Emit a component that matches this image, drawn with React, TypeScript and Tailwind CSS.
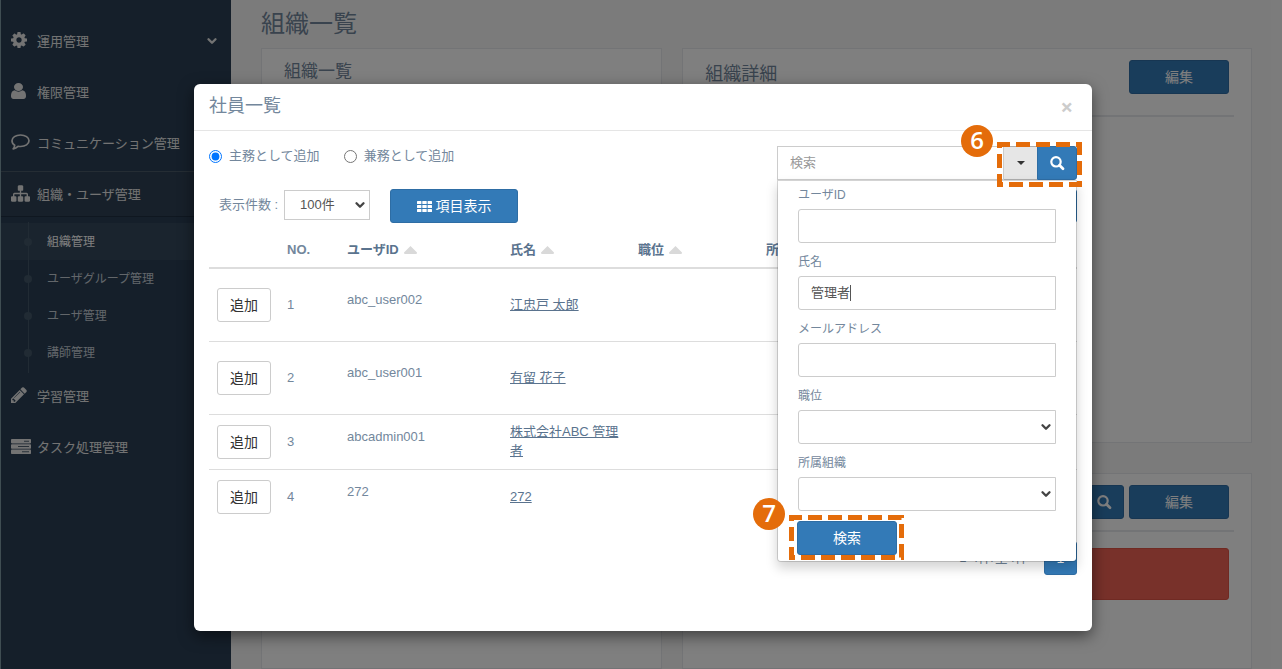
import { useState } from 'react'
import type { ReactNode } from 'react'
import { ChevronDown } from 'lucide-react'

const users = [
  { no: 1, id: 'abc_user002', name: '江忠戸 太郎', row: 'h-[73px]' },
  { no: 2, id: 'abc_user001', name: '有留 花子', row: 'h-[73px]' },
  { no: 3, id: 'abcadmin001', name: '株式会社ABC 管理者', row: 'h-[55px]' },
  { no: 4, id: '272', name: '272', row: 'h-[55px]' }
]

const subMenu = ['組織管理', 'ユーザグループ管理', 'ユーザ管理', '講師管理']

const primary = 'rounded-[3px] border border-[#2e6da4] bg-[#337ab7] text-sm text-white'
const field = 'h-[34px] w-full border border-[#ccc] bg-white px-3 text-[13px] text-[#555] outline-none'

function GearIcon() {
  return (
    <svg className="size-4" viewBox="0 0 1536 1536" fill="currentColor">
      <path d="M1024 768q0-106-75-181t-181-75-181 75-75 181 75 181 181 75 181-75 75-181zm512-109v222q0 12-8 23t-20 13l-185 28q-19 54-39 91 35 50 107 138 10 12 10 25t-9 23q-27 37-99 108t-94 71q-12 0-26-9l-138-108q-44 23-91 38-16 136-29 186-7 28-36 28H657q-14 0-24.5-8.5t-11.5-21.5l-28-184q-49-16-90-37l-141 107q-10 9-25 9-14 0-25-11-126-114-165-168-7-10-7-23 0-12 8-23 15-21 51-66.5t54-70.5q-27-50-41-99L29 913q-13-2-21-12.500T0 877V655q0-12 8-23t19-13l186-28q14-46 39-92-40-57-107-138-10-12-10-24 0-10 9-23 26-36 98.500-107.500T337 135q13 0 26 10l138 107q44-23 91-38 16-136 29-186 7-28 36-28h222q14 0 24.500 8.500T915 30l28 184q49 16 90 37l142-107q9-9 24-9 13 0 25 10 129 119 165 170 7 8 7 22 0 12-8 23-15 21-51 66.500t-54 70.500q26 50 41 98l183 28q13 2 21 12.500t8 23.500z" />
    </svg>
  )
}

function UserIcon() {
  return (
    <svg className="h-4 w-[15px]" viewBox="0 0 1280 1536" preserveAspectRatio="none" fill="currentColor">
      <path d="M1280 1271q0 109-62.500 187t-150.500 78H213q-88 0-150.500-78T0 1271q0-85 8.500-160.500t31.500-152 58.500-131 94-89T327 704q131 128 313 128t313-128q76 0 134.500 34.500t94 89 58.500 131 31.500 152 8.500 160.500zm-256-887q0 159-112.500 271.500T640 768 368.500 655.500 256 384t112.500-271.500T640 0t271.500 112.500T1024 384z" />
    </svg>
  )
}

function CommentIcon() {
  return (
    <svg className="h-4 w-[19px]" viewBox="0 0 19 16" fill="none" stroke="currentColor" strokeWidth="1.7" strokeLinejoin="round">
      <path d="M9.5 1 C14.300 1 18 3.500 18 6.800 S14.300 12.500 9.500 12.500 C8.600 12.500 7.800 12.400 7 12.300 C5.700 13.600 4 14.500 2.200 14.800 C3.100 13.900 3.600 12.700 3.700 11.200 C2 10.200 1 8.600 1 6.800 C1 3.500 4.700 1 9.500 1 Z" />
    </svg>
  )
}

function SitemapIcon() {
  return (
    <svg className="size-[19px]" viewBox="0 0 1792 1792" fill="currentColor">
      <path d="M1792 1248v320q0 40-28 68t-68 28h-320q-40 0-68-28t-28-68v-320q0-40 28-68t68-28h96V960H960v192h96q40 0 68 28t28 68v320q0 40-28 68t-68 28H736q-40 0-68-28t-28-68v-320q0-40 28-68t68-28h96V960H320v192h96q40 0 68 28t28 68v320q0 40-28 68t-68 28H96q-40 0-68-28t-28-68v-320q0-40 28-68t68-28h96V960q0-52 38-90t90-38h512V640h-96q-40 0-68-28t-28-68V224q0-40 28-68t68-28h320q40 0 68 28t28 68v320q0 40-28 68t-68 28h-96v192h512q52 0 90 38t38 90v192h96q40 0 68 28t28 68z" />
    </svg>
  )
}

function PencilIcon() {
  return (
    <svg className="size-4" viewBox="0 128 1536 1536" fill="currentColor">
      <path d="M363 1536l91-91-235-235-91 91v107h128v128h107zm523-928q0-22-22-22-10 0-17 7l-542 542q-7 7-7 17 0 22 22 22 10 0 17-7l542-542q7-7 7-17zm-54-192l416 416-832 832H0v-416zm683 96q0 53-37 90l-166 166-416-416 166-165q36-38 90-38 53 0 91 38l235 234q37 39 37 91z" />
    </svg>
  )
}

function TasksIcon() {
  return (
    <svg className="h-[15px] w-5" viewBox="0 0 20 15">
      <g fill="currentColor">
        <rect width="20" height="4.400" rx="0.800" />
        <rect y="5.300" width="20" height="4.400" rx="0.800" />
        <rect y="10.600" width="20" height="4.400" rx="0.800" />
      </g>
      <g fill="#2a3f54">
        <rect x="13" y="1.800" width="5" height="0.800" />
        <rect x="7" y="7.100" width="11" height="0.800" />
        <rect x="11" y="12.400" width="7" height="0.800" />
      </g>
    </svg>
  )
}

function SearchIcon() {
  return (
    <svg className="size-4" viewBox="0 0 16 16" fill="none" stroke="currentColor">
      <circle cx="7" cy="6.800" r="4.700" strokeWidth="2.200" />
      <path d="M10.500 10.300 L14 13.800" strokeWidth="2.800" strokeLinecap="round" />
    </svg>
  )
}

function GridIcon() {
  return (
    <svg className="h-[11px] w-[15px]" viewBox="0 0 15 11" fill="currentColor">
      {[0, 4, 8].map(y => [0, 5.3, 10.6].map(x => <rect key={`${x}-${y}`} x={x} y={y} width="4.400" height="3" rx="0.500" />))}
    </svg>
  )
}

function MenuItem({ icon, label, active, open }: { icon: ReactNode; label: string; active?: boolean; open?: boolean }) {
  return (
    <a
      href="#"
      className={`mb-[5px] flex h-[46px] items-center border-y pr-3 pl-2.5 ${
        active ? 'border-t-[#4a5a69] border-b-[#1f2f40] bg-[#2e4154]' : 'border-transparent'
      }`}
    >
      <span className="flex w-[26px] pb-0.5">{icon}</span>
      <span className="flex-1 pt-0.5">{label}</span>
      {open && <ChevronDown className="size-3.5" strokeWidth={4} />}
    </a>
  )
}

function Sidebar() {
  return (
    <nav className="w-[231px] shrink-0 border-l border-[#7e9aa5] bg-[#2a3f54] pt-[18px] text-[#e7e7e7]">
      <MenuItem icon={<GearIcon />} label="運用管理" open />
      <MenuItem icon={<UserIcon />} label="権限管理" />
      <MenuItem icon={<CommentIcon />} label="コミュニケーション管理" />
      <MenuItem icon={<SitemapIcon />} label="組織・ユーザ管理" active />
      <ul className="relative pt-px pb-0.5 text-xs">
        <li className="absolute top-0 bottom-0 left-[27px] w-px bg-[#425668]" />
        {subMenu.map((label, i) => (
          <li key={label} className={i === 0 ? 'bg-[#34485c]' : ''}>
            <a href="#" className="flex h-[37px] items-center pl-[23px]">
              <span className="mr-[15px] size-2 rounded-full bg-[#425668]" />
              <span className={i === 0 ? 'text-white' : 'text-[#c5cdd5]'}>{label}</span>
            </a>
          </li>
        ))}
      </ul>
      <MenuItem icon={<PencilIcon />} label="学習管理" />
      <MenuItem icon={<TasksIcon />} label="タスク処理管理" />
    </nav>
  )
}

function Background() {
  return (
    <main className="flex min-w-0 flex-1 flex-col bg-[#f7f7f7] px-[30px] text-[#73879c]">
      <h1 className="flex h-12 items-center text-2xl">組織一覧</h1>
      <div className="-mx-2.5 flex flex-1">
        <div className="flex w-5/12 px-2.5">
          <section className="flex-1 border border-[#e6e9ed] bg-white px-[22px] pt-[11px]">
            <h2 className="text-[17px] leading-6">組織一覧</h2>
          </section>
        </div>
        <div className="flex w-7/12 flex-col gap-[30px] px-2.5">
          <section className="h-[395px] border border-[#e6e9ed] bg-white px-[17px] pt-[11px]">
            <div className="flex h-[57px] items-start justify-between border-b-2 border-[#e6e9ed] px-[5px]">
              <h2 className="pt-0.5 text-lg leading-6">組織詳細</h2>
              <button type="button" className={`${primary} h-[34px] w-[100px]`}>編集</button>
            </div>
          </section>
          <section className="flex-1 border border-[#e6e9ed] bg-white px-[17px] pt-[11px]">
            <div className="flex h-[47px] items-start justify-end gap-[5px] border-b-2 border-[#e6e9ed] pr-[5px]">
              <button type="button" aria-label="検索" className={`${primary} flex h-[34px] w-10 items-center justify-center`}>
                <SearchIcon />
              </button>
              <button type="button" className={`${primary} h-[34px] w-[100px]`}>編集</button>
            </div>
            <div className="mx-[5px] mt-4 h-[52px] rounded-[3px] border border-[#e05547] bg-[#f06254]" />
          </section>
        </div>
      </div>
    </main>
  )
}

/* Numbered badge of the manual's callouts */
function Step({ n, className }: { n: number; className: string }) {
  return (
    <span
      className={`absolute z-20 flex size-8 items-center justify-center rounded-full bg-[#e46c0a] pb-0.5 font-['Open_Sans',sans-serif] text-2xl font-semibold text-white ${className}`}
    >
      {n}
    </span>
  )
}

function DashedFrame({ width, height, className }: { width: number; height: number; className: string }) {
  return (
    <svg width={width} height={height} className={`pointer-events-none absolute z-10 max-w-none ${className}`}>
      <rect
        x="2.5"
        y="2.5"
        width={width - 5}
        height={height - 5}
        fill="none"
        stroke="#e46c0a"
        strokeWidth="5"
        strokeDasharray="14 6"
        strokeDashoffset="3.5"
      />
    </svg>
  )
}

function Select({ id, className, children }: { id: string; className: string; children?: ReactNode }) {
  return (
    <div className={`relative ${className}`}>
      <select id={id} className="h-full w-full appearance-none rounded-l-[inherit] border border-[#ccc] bg-white pl-[15px] text-[13px] text-[#555] outline-none">
        {children}
      </select>
      <ChevronDown className="pointer-events-none absolute top-1/2 right-[3px] size-3.5 -translate-y-1/2 text-[#444]" strokeWidth={4} />
    </div>
  )
}

function SearchDropdown() {
  const [name, setName] = useState('管理者')

  return (
    <form className="absolute inset-x-0 top-[34px] rounded-b border border-black/15 bg-white bg-clip-padding px-5 pt-[5px] pb-1.5 shadow-[0_6px_12px_rgba(0,0,0,0.175)]">
      <label htmlFor="userId" className="block h-[23px] text-xs leading-[18px]">ユーザID</label>
      <input id="userId" className={`${field} mb-2.5 block rounded-l-[3px]`} />
      <label htmlFor="name" className="block h-[23px] text-xs leading-[18px]">氏名</label>
      <div className={`${field} mb-2.5 flex items-center rounded-l-[3px]`}>
        <input
          id="name"
          value={name}
          onChange={e => setName(e.target.value)}
          className="w-[39px] outline-none"
        />
        <span className="h-4 w-px bg-[#555]" />
      </div>
      <label htmlFor="mail" className="block h-[23px] text-xs leading-[18px]">メールアドレス</label>
      <input id="mail" className={`${field} mb-2.5 block rounded-l-[3px]`} />
      <label htmlFor="position" className="block h-[23px] text-xs leading-[18px]">職位</label>
      <Select id="position" className="mb-2.5 h-[34px] rounded-l-[3px]" />
      <label htmlFor="org" className="block h-[23px] text-xs leading-[18px]">所属組織</label>
      <Select id="org" className="mb-2.5 h-[34px] rounded-l-[3px]" />
      <div className="relative -ml-px w-[100px]">
        <button type="button" className={`${primary} block h-[34px] w-full`}>検索</button>
        <DashedFrame width={115} height={45} className="-top-1.5 -left-2" />
        <Step n={7} className="-top-[23px] -left-11" />
      </div>
    </form>
  )
}

function SortMark() {
  return (
    <svg width="13" height="8" viewBox="0 0 13 8" className="ml-[5px] inline-block">
      <path d="M6.5 0 L13 6.5 Q13 8 12 8 H1 Q0 8 0 6.5 Z" fill="#d9d9d9" />
    </svg>
  )
}

function UserTable() {
  return (
    <table className="w-full table-fixed border-collapse text-left leading-[19px]">
      <colgroup>
        <col className="w-[70px]" />
        <col className="w-[60px]" />
        <col className="w-[163px]" />
        <col className="w-[128px]" />
        <col className="w-[128px]" />
        <col />
      </colgroup>
      <thead>
        <tr className="h-[37px] border-b-2 border-[#ddd] text-[#5a738e]">
          <th className="px-2" />
          <th className="px-2 text-[#73879c]">NO.</th>
          <th className="px-2">ユーザID<SortMark /></th>
          <th className="px-2">氏名<SortMark /></th>
          <th className="px-2">職位<SortMark /></th>
          <th className="px-2">所属組織<SortMark /></th>
        </tr>
      </thead>
      <tbody>
        {users.map(user => (
          <tr key={user.no} className={`${user.row} border-b border-[#ddd] last:border-b-0`}>
            <td className="px-2">
              <button type="button" className="block h-[34px] w-[54px] rounded-[3px] border border-[#ccc] bg-white text-sm text-[#333]">
                追加
              </button>
            </td>
            <td className="px-2 pb-px">{user.no}</td>
            <td className="px-2 pb-[11px]">{user.id}</td>
            <td className="px-2 pb-px">
              <a href="#" className="text-[#5a738e] underline">{user.name}</a>
            </td>
            <td />
            <td />
          </tr>
        ))}
      </tbody>
    </table>
  )
}

function EmployeeModal() {
  const [role, setRole] = useState('main')

  return (
    <div
      role="dialog"
      aria-label="社員一覧"
      className="mx-auto w-[898px] max-w-full rounded-md bg-white text-[#73879c] shadow-[0_5px_15px_rgba(0,0,0,0.5)]"
    >
      <div className="flex h-[47px] items-center justify-between border-b border-[#e5e5e5] px-[15px]">
        <h4 className="pb-0.5 text-lg">社員一覧</h4>
        <button type="button" aria-label="閉じる" className="mr-1 pb-0.5 font-['Open_Sans',sans-serif] text-[22px] leading-5 font-bold text-[#ccc]">
          ×
        </button>
      </div>

      <div className="px-[15px] pt-[15px] pb-14">
        <div className="flex h-[43px] items-start justify-between">
          <div className="flex h-5 items-center gap-6">
            <label className="flex items-center gap-[7px]">
              <input type="radio" name="role" checked={role === 'main'} onChange={() => setRole('main')} className="size-[13px]" />
              主務として追加
            </label>
            <label className="flex items-center gap-[7px]">
              <input type="radio" name="role" checked={role === 'sub'} onChange={() => setRole('sub')} className="size-[13px]" />
              兼務として追加
            </label>
          </div>

          <div className="relative z-10 flex w-[300px]">
            <input aria-label="検索" placeholder="検索" className={`${field} min-w-0 flex-1 pb-0.5 placeholder:text-[#999]`} />
            <button type="button" aria-label="詳細検索" className="flex h-[34px] w-[33px] items-center justify-center border-y border-[#adadad] bg-[#e6e6e6]">
              <span className="border-x-4 border-t-4 border-x-transparent border-t-[#333]" />
            </button>
            <button type="button" aria-label="検索実行" className={`${primary} flex h-[34px] w-10 items-center justify-center rounded-l-none`}>
              <SearchIcon />
            </button>
            <SearchDropdown />
            <DashedFrame width={85} height={45} className="-top-1 -right-[5px]" />
            <Step n={6} className="-top-[21px] right-21" />
          </div>
        </div>

        <div className="flex h-[42px] items-start">
          <label htmlFor="count" className="w-[75px] pt-1.5 pl-2.5 leading-[19px] whitespace-nowrap">表示件数 :</label>
          <Select id="count" className="mt-px h-[30px] w-[86px]">
            <option>100件</option>
          </Select>
          <button type="button" className={`${primary} ml-5 flex h-[34px] w-32 items-center justify-center gap-1`}>
            <GridIcon />
            項目表示
          </button>
          <button type="button" className={`${primary} ml-auto h-[34px] w-[100px]`}>一括追加</button>
        </div>

        <UserTable />

        <div className="mt-[17px] flex items-center justify-end gap-4">
          <span>1-4件/全4件</span>
          <button type="button" className={`${primary} h-[34px] w-[33px]`}>1</button>
        </div>
      </div>
    </div>
  )
}

export default function App() {
  return (
    <div className="relative flex h-screen overflow-hidden font-['Liberation_Sans','Noto_Sans_CJK_JP',sans-serif] text-[13px]">
      <Sidebar />
      <Background />
      <div className="absolute inset-0 bg-black/50 pt-[84px] pl-1">
        <EmployeeModal />
      </div>
    </div>
  )
}
